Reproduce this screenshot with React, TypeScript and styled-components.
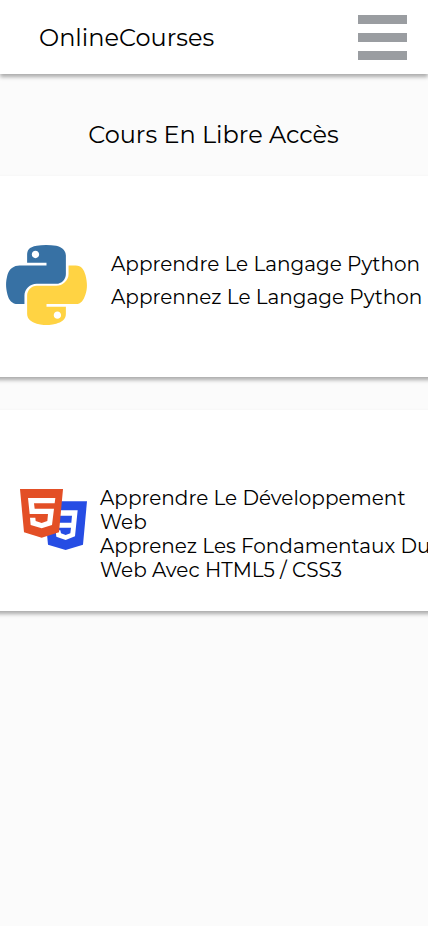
import React from "react";
import styled, { createGlobalStyle } from "styled-components";

const GlobalStyle = createGlobalStyle`
  * { box-sizing: border-box; }
  body {
    margin: 0;
    background: #fbfbfb;
    color: #000;
    font-family: Montserrat, Inter, sans-serif;
    overflow-x: hidden;
  }
`;

const Page = styled.div`
  width: 100%;
  min-height: 926px;
  overflow: hidden;
`;

const Header = styled.header`
  height: 74px;
  padding: 0 21px 0 39px;
  display: flex;
  align-items: center;
  justify-content: space-between;
  background: #fff;
  box-shadow: 0 3px 4px rgba(0, 0, 0, 0.32);
`;

const Line = styled.span`
  display: block;
  white-space: nowrap;
`;

const Brand = styled.div`
  padding-top: 1px;
  font-size: 24px;
  font-weight: 400;
  line-height: 30px;
`;

const MenuButton = styled.button`
  width: 49px;
  height: 45px;
  padding: 0;
  border: 0;
  background: none;
  display: flex;
  flex-direction: column;
  justify-content: space-between;
`;

const MenuBar = styled.span`
  height: 9px;
  width: 100%;
  background: #9a9da1;
`;

const Heading = styled.h1`
  margin: 0;
  height: 102px;
  padding: 46px 1px 0 0;
  font-size: 24px;
  font-weight: 400;
  line-height: 30px;
  text-align: center;
`;

const Courses = styled.main`
  display: flex;
  flex-direction: column;
  gap: 33px;
`;

const Card = styled.article<{ $inset: number; $gap: number }>`
  width: 460px;
  height: 201px;
  margin-left: -10px;
  padding-left: ${(p) => p.$inset + 10}px;
  display: flex;
  gap: ${(p) => p.$gap}px;
  background: #fff;
  box-shadow: 0 3px 4px rgba(0, 0, 0, 0.32);
`;

const Logo = styled.svg<{ $top: number }>`
  display: block;
  flex: none;
  margin-top: ${(p) => p.$top}px;
`;

const Copy = styled.div<{ $top: number; $leading: number }>`
  padding-top: ${(p) => p.$top}px;
  font-size: 20px;
  font-weight: 400;
  line-height: ${(p) => p.$leading}px;
`;

const PythonLogo = () => (
  <Logo $top={69} width="81" height="80" viewBox="3.4 2.8 121.2 122.2" preserveAspectRatio="none">
    <path
      fill="#3771a4"
      d="M49.33 62h29.159C86.606 62 93 55.132 93 46.981V19.183c0-7.912-6.632-13.856-14.555-15.176-5.014-.835-10.195-1.215-15.187-1.191-4.99.023-9.612.448-13.805 1.191C37.098 6.188 35 10.758 35 19.183V30h29v4H23.776c-8.484 0-15.914 5.108-18.237 14.811-2.681 11.12-2.8 17.919 0 29.53C7.614 86.983 12.569 93 21.054 93H31V79.952C31 70.315 39.428 62 49.33 62zm-1.838-39.11c-3.026 0-5.478-2.479-5.478-5.545 0-3.079 2.451-5.581 5.478-5.581 3.015 0 5.479 2.502 5.479 5.581-.001 3.066-2.465 5.545-5.479 5.545z"
    />
    <path
      fill="#ffd343"
      d="M122.281 48.811C120.183 40.363 116.178 34 107.682 34H97v12.981C97 57.031 88.206 65 78.489 65H49.33C41.342 65 35 72.326 35 80.326v27.8c0 7.91 6.745 12.564 14.462 14.834 9.242 2.717 17.994 3.208 29.051 0C85.862 120.831 93 116.549 93 108.126V97H64v-4h43.682c8.484 0 11.647-5.776 14.599-14.66 3.047-9.145 2.916-17.799 0-29.529zm-41.955 55.606c3.027 0 5.479 2.479 5.479 5.547 0 3.076-2.451 5.579-5.479 5.579-3.015 0-5.478-2.502-5.478-5.579 0-3.068 2.463-5.547 5.478-5.547z"
    />
  </Logo>
);

const WebLogo = () => (
  <Logo $top={79} width="67" height="61" viewBox="30 27 201 183">
    <path fill="#264de4" d="M102 64H231L219 194L167 210L114 194Z" />
    <path
      fill="#fff"
      d="M120 91H203L195 169L167 180L139 170L137 151H151L153 160L167 165L181 160L183 143H136L134 128H184L186 107H121Z"
    />
    <path fill="#e34f26" d="M30 27H159L147 157L95 173L42 157Z" />
    <path
      fill="#fff"
      d="M54 54H136L134 70H72L74 86H132L126 135L95 145L62 135L60 113H76L77 123L95 129L112 123L114 102H59Z"
    />
  </Logo>
);

export default function App() {
  return (
    <>
      <GlobalStyle />
      <Page>
        <Header>
          <Brand>OnlineCourses</Brand>
          <MenuButton aria-label="Menu">
            <MenuBar />
            <MenuBar />
            <MenuBar />
          </MenuButton>
        </Header>
        <Heading>Cours En Libre Accès</Heading>
        <Courses>
          <Card $inset={6} $gap={24}>
            <PythonLogo />
            <Copy $top={72} $leading={33}>
              <Line>Apprendre Le Langage Python</Line>
              <Line>Apprennez Le Langage Python</Line>
            </Copy>
          </Card>
          <Card $inset={20} $gap={13}>
            <WebLogo />
            <Copy $top={76} $leading={24}>
              <Line>Apprendre Le Développement</Line>
              <Line>Web</Line>
              <Line>Apprenez Les Fondamentaux Du</Line>
              <Line>Web Avec HTML5 / CSS3</Line>
            </Copy>
          </Card>
        </Courses>
      </Page>
    </>
  );
}
